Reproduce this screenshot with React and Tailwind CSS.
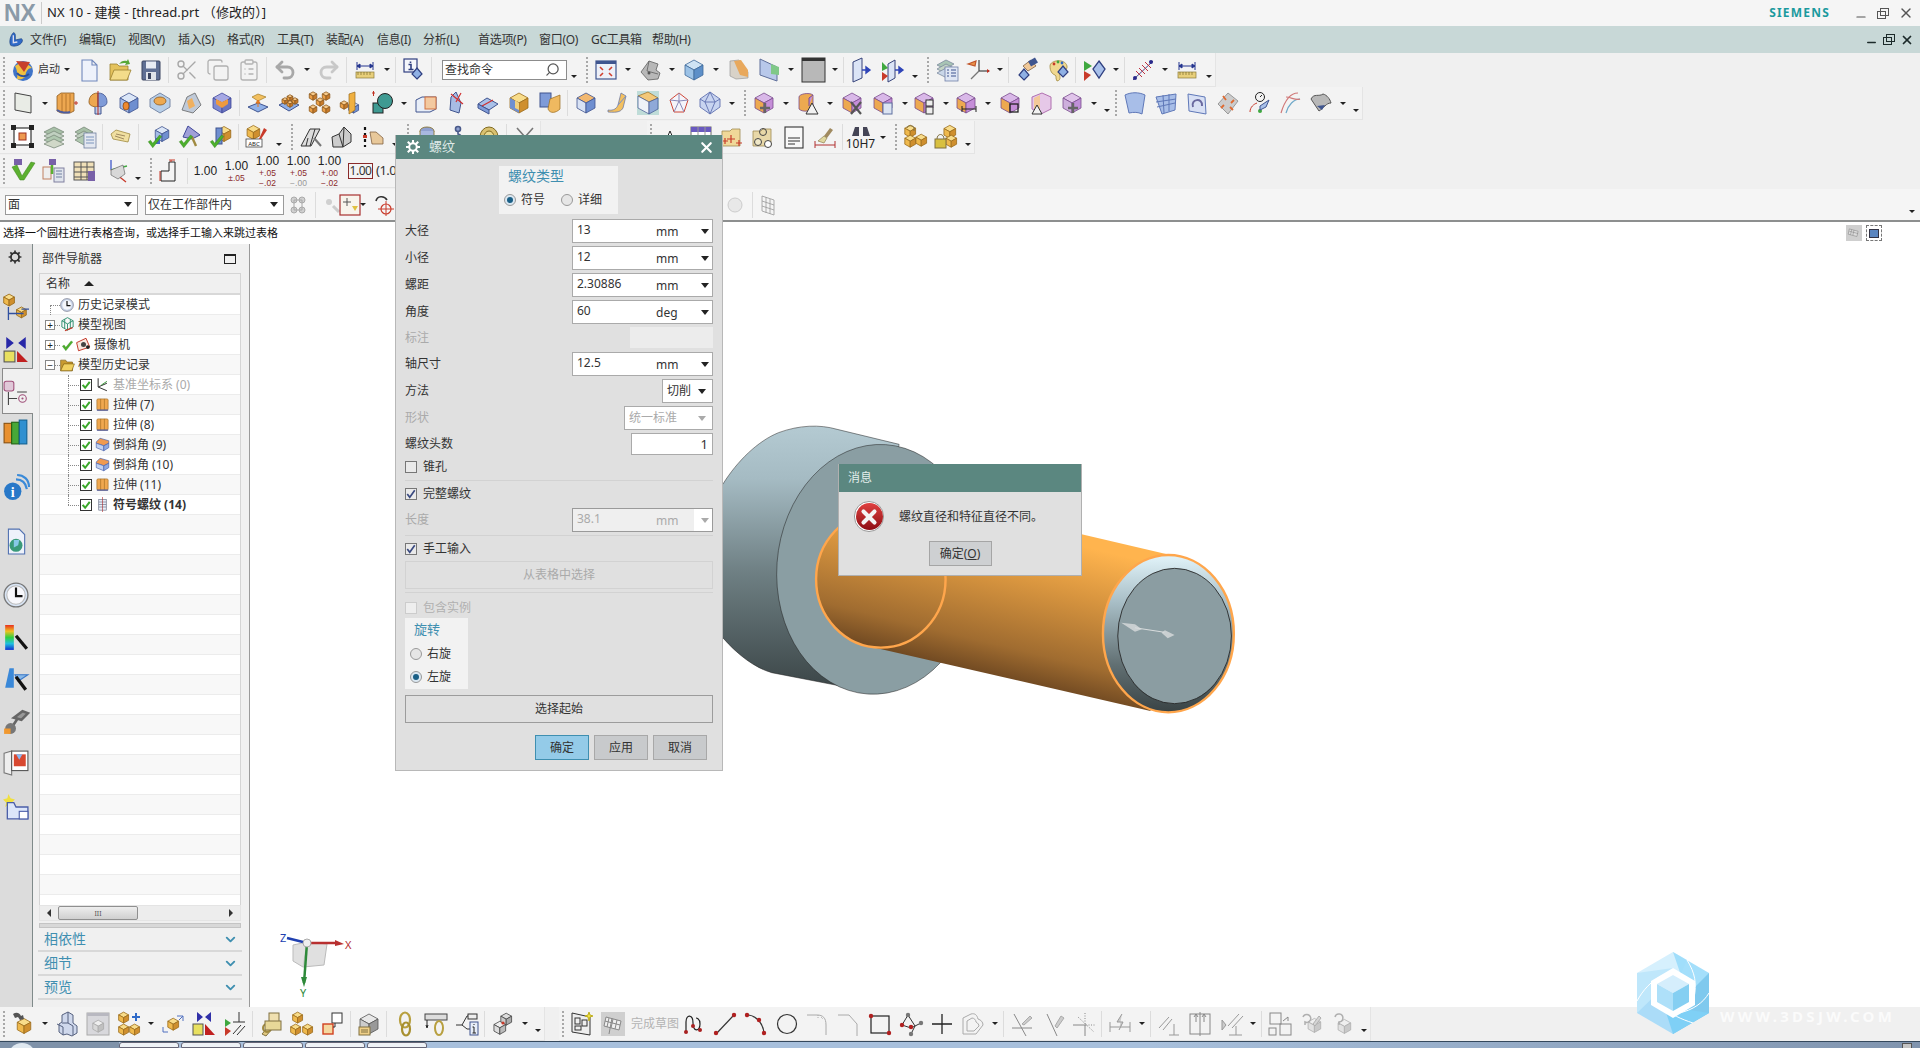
import { Search, Scissors, Copy, ClipboardList, Undo2, Redo2, X, Minus, ChevronDown } from 'lucide-react';

const Cube = ({ x = 0, y = 0, s = 1, t = '#c9d6ee', l = '#8ea6d8', r = '#5f78b8', c = '#3f4f7f' }) => (
    <g transform={`translate(${x} ${y}) scale(${s})`} stroke={c} strokeWidth={0.8 / s} strokeLinejoin="round">
        <polygon points="12,2 21,7 12,12 3,7" fill={t} />
        <polygon points="3,7 12,12 12,22 3,17" fill={l} />
        <polygon points="21,7 12,12 12,22 21,17" fill={r} />
    </g>
);

const gold = { t: '#f8dc8a', l: '#efb94d', r: '#cf8f2e', c: '#9a6c1c' };
const orange = { t: '#f7c98a', l: '#eda047', r: '#c87a2a', c: '#8d5a20' };
const blue = { t: '#dbe6f7', l: '#a4bce8', r: '#6f8fd0', c: '#40548f' };
const purple = { t: '#d9b8e8', l: '#eda950', r: '#c58ed8', c: '#7a4d8e' };

const Diamond = ({ x = 14, y = 14 }) => <polygon points={`${x},${y + 8} ${x + 5},${y + 3} ${x},${y - 3} ${x - 5},${y + 3}`} fill="#8fb0e4" stroke="#2f3f80" strokeWidth="1.2" />;
const Ruler = ({ y = 15 }) => <g><rect x="3" y={y} width="18" height="6" fill="#e8cf7a" stroke="#8a7a3a" strokeWidth=".7" /><path d={`M5 ${y}v3M8 ${y}v3M11 ${y}v3M14 ${y}v3M17 ${y}v3`} stroke="#6a5a20" strokeWidth=".6" /></g>;
const Dim = ({ y = 8, c = '#24358f' }) => <path d={`M4 ${y - 4}v8M20 ${y - 4}v8M4 ${y}h16M4 ${y}l3-2v4zM20 ${y}l-3-2v4z`} stroke={c} strokeWidth="1" fill={c} />;
const Check = ({ x = 0, y = 0, s = 1 }) => <path transform={`translate(${x} ${y}) scale(${s})`} d="M3 13l3-2 3 4 9-11 3 2-12 15z" fill="#4caf2c" stroke="#2b7a18" strokeWidth=".5" />;

const ICONS = {
    start: <g><circle cx="12" cy="13" r="10" fill="#3f74c8" /><path d="M4 8c5-4 13-3 17 2-4 0-6 3-7 9-2 2-5 3-8 2 1-5 0-9-2-13z" fill="#f0c040" /><path d="M5 3l14 1-6 10z" fill="#c8402c" /><path d="M6 15c3 4 9 4 12 1" stroke="#2a4f9a" strokeWidth="2" fill="none" /></g>,
    doc: <path d="M5 2h10l5 5v16H5z M15 2v5h5" fill="#eef2fb" stroke="#7088bc" strokeWidth="1.1" />,
    folder: <g><path d="M2 6h7l2 2h9v14H2z" fill="#e4c25c" stroke="#9a8030" strokeWidth=".8" /><path d="M2 22l4-10h17l-4 10z" fill="#f3dc8a" stroke="#9a8030" strokeWidth=".8" /><path d="M11 6c2-3 5-4 8-3l1-2 2 5-5 1 1-2c-2 0-5 0-7 1z" fill="#58a838" /></g>,
    save: <g><rect x="3" y="3" width="18" height="19" rx="1" fill="#5f6f94" stroke="#3a4460" /><rect x="7" y="3.5" width="10" height="7" fill="#e8ecf4" /><rect x="7" y="14" width="10" height="8" fill="#dfe3ea" /><rect x="9" y="15" width="3" height="6" fill="#3a4460" /></g>,
    scissors: <Scissors x="0" y="0" width="24" height="24" color="#a8a8a8" strokeWidth="1.4" />,
    copy: <Copy x="0" y="0" width="24" height="24" color="#b0b0b0" strokeWidth="1.3" />,
    paste: <ClipboardList x="0" y="0" width="24" height="24" color="#b4b4b4" strokeWidth="1.3" />,
    undo: <Undo2 x="0" y="0" width="24" height="24" color="#a8a8a8" strokeWidth="2.8" />,
    redo: <Redo2 x="0" y="0" width="24" height="24" color="#c8c8c8" strokeWidth="2.8" />,
    measure: <g><Dim y={8} /><Ruler y={14} /></g>,
    info: <g><rect x="2" y="1" width="13" height="13" fill="#f4f6fb" stroke="#2f3f80" strokeWidth="1.2" /><path d="M8.5 3.5v1.5M6.5 6.5h2.5v5M6.5 11.5h5" stroke="#2f3f80" strokeWidth="1.6" fill="none" /><Diamond x={15} y={13} /></g>,
    fit: <g><rect x="2" y="3" width="20" height="18" fill="#edf0f8" stroke="#3f558f" strokeWidth="1.2" /><rect x="2" y="3" width="20" height="3" fill="#3f558f" /><path d="M6 9l3 3M18 9l-3 3M6 18l3-3M18 18l-3-3" stroke="#d04030" strokeWidth="1.6" /></g>,
    bracket: <g><path d="M3 14L11 3l9 3-2 6 4 3-2 6-10 1z" fill="#b8b8b8" stroke="#606060" strokeWidth=".8" /><path d="M11 3l-2 10 11 3" fill="none" stroke="#606060" strokeWidth=".8" /><circle cx="11" cy="15" r="1.5" fill="#555" /></g>,
    cubeB: <Cube t="#cfe3f4" l="#9cc2e6" r="#5d8fc8" c="#3f6a9a" />,
    sheetO: <g><polygon points="4,3 13,2 22,14 22,20 10,21 4,18" fill="#d8d2c8" stroke="#999" strokeWidth=".7" /><polygon points="8,3 15,2 22,12 22,19 14,17" fill="#e8a85c" /></g>,
    panelG: <g><polygon points="3,1 20,9 20,23 3,17" fill="#b8c8ea" stroke="#5f6f9a" /><polygon points="14,6 22,9 22,17 14,16" fill="#7fc888" /></g>,
    blackRect: <g><rect x="1" y="0" width="23" height="24" fill="#b8b8b8" stroke="#333" strokeWidth="1" /><rect x="1" y="0" width="23" height="3" fill="#333" /></g>,
    panelArrow: <g><polygon points="3,4 12,0 12,20 3,24" fill="#dbe4f6" stroke="#36437a" /><path d="M12 12h8M20 12l-4-3v6z" stroke="#2f45b8" strokeWidth="1.4" fill="#2f45b8" /></g>,
    panelArrow2: <g><polygon points="7,6 14,2 14,20 7,24" fill="#dbe4f6" stroke="#36437a" /><path d="M1 4l6 6-6 3z" fill="#3fa83f" /><path d="M1 14l6 4-6 5z" fill="#c83a2a" /><path d="M14 12h8M22 12l-4-3v6z" stroke="#2f45b8" strokeWidth="1.4" fill="#2f45b8" /></g>,
    layers: <g fill="#cdd8e8" stroke="#7c8a9e" strokeWidth=".8"><path d="M2 7l9-5 8 4-9 5z" fill="#a8c4b4" /><path d="M2 11l9-5 8 4-9 5z" fill="#c4d4c4" /><path d="M2 15l9-5 8 4-9 5z" fill="#c9d6e8" /><rect x="10" y="9" width="13" height="14" fill="#dfe6f4" stroke="#6f7fa8" /><path d="M12 12h2M16 12h5M12 15h2M16 15h5M12 18h2M16 18h5" stroke="#3f558f" strokeWidth="1" /></g>,
    csys: <g fill="none" strokeWidth="1.2"><path d="M13 13V2" stroke="#444" /><path d="M13 13h10" stroke="#444" /><path d="M13 13l-8 8" stroke="#777" /><path d="M2 6l8-3-1 5z" fill="#e8924a" stroke="#c0542a" /><path d="M21 11l3 2-3 2z" fill="#c03020" stroke="none" /></g>,
    hand: <g><path d="M8 8l8-6 5 6-8 5z" fill="#f0c898" stroke="#806040" strokeWidth=".8" /><rect x="14" y="1" width="8" height="6" fill="#3f558f" transform="rotate(-30 18 4)" /><Diamond x={9} y={14} /></g>,
    palette: <g><path d="M4 8c0-6 15-8 17 0 1 5-6 5-7 7-1 3 2 7-3 8-2-3 0-5-2-6-3-1-5-4-5-9z" fill="#f0d890" stroke="#a08a40" strokeWidth=".8" /><circle cx="8" cy="6" r="1.4" fill="#c83a2a" /><circle cx="12" cy="4" r="1.4" fill="#3fa83f" /><circle cx="16" cy="5" r="1.4" fill="#2f6ac8" /><Diamond x={17} y={11} /></g>,
    flagD: <g><path d="M2 3l8 5-8 5z" fill="#3fa83f" /><path d="M2 13l7 4-7 6z" fill="#c83a2a" /><polygon points="17,3 23,11 17,20 11,11" fill="#a8c0ea" stroke="#2f3f80" strokeWidth="1.3" /></g>,
    hatch: <g stroke="#c03040" strokeWidth="1"><path d="M2 22L22 3" stroke="#4a4a8a" /><path d="M5 13l6 6M8 10l6 6M11 7l6 6M14 4l6 6" /><circle cx="20" cy="4" r="2" fill="#28288a" stroke="none" /><circle cx="4" cy="20" r="2" fill="#28288a" stroke="none" /></g>,

    plane: <polygon points="4,2 20,5 20,22 4,19" fill="#e9ece6" stroke="#444" strokeWidth="1" />,
    extrude: <g><path d="M2 5l4-3h13v18l-4 2H6l-4-2z" fill="#eda750" stroke="#8d5a20" strokeWidth=".8" /><path d="M7 3v18M11 3v18M15 3v18" stroke="#a86a24" strokeWidth=".8" /><path d="M2 19c4 3 10 3 13 2" stroke="#4c5da0" strokeWidth="2" fill="none" /><path d="M19 12h4M21 10v4" stroke="#c03020" strokeWidth="1" /></g>,
    revolve: <g><path d="M12 2C5 2 3 7 3 11c0 3 3 5 9 5z" fill="#eda750" stroke="#8d5a20" strokeWidth=".8" /><path d="M12 2c7 0 9 5 9 9 0 3-3 5-9 5z" fill="#7f9bd8" stroke="#40548f" strokeWidth=".8" /><path d="M9 16v7h6v-7" fill="#b8c8e8" stroke="#40548f" /><path d="M12 0v24" stroke="#c03020" strokeWidth="1" /></g>,
    hole: <g><Cube {...blue} /><ellipse cx="9" cy="15" rx="3" ry="4" fill="#ee8a30" stroke="#8d4a10" strokeWidth=".8" /></g>,
    boss: <g><polygon points="12,2 22,8 22,16 12,22 2,16 2,8" fill="#b8cfe8" stroke="#7a8aa8" /><ellipse cx="12" cy="10" rx="6" ry="4" fill="#eda950" stroke="#8d5a20" strokeWidth=".8" /></g>,
    pocket: <g><path d="M3 19L8 6l8-4 6 12-8 8z" fill="#c0cad8" stroke="#666" strokeWidth=".8" /><path d="M8 10l5-3 3 8-6 3z" fill="#efb060" /></g>,
    rib: <g><Cube t="#a6a8e4" l="#7f8ad0" r="#6a74c0" c="#40489a" /><polygon points="6,8 12,11 18,8 18,13 12,17 6,13" fill="#ee9a40" /></g>,
    offsetUp: <g><polygon points="2,16 12,12 22,16 12,21" fill="#8fb0e8" stroke="#40548f" /><polygon points="6,6 12,3 20,6 12,10" fill="#f3c060" stroke="#a07a20" strokeWidth=".7" /><path d="M12 9v7M12 9l-2 3h4z" stroke="#e07820" fill="#e07820" /></g>,
    array: <g><polygon points="2,14 12,9 22,14 12,20" fill="#8fb0e8" stroke="#40548f" /><Cube {...orange} x={4} y={6} s={0.33} /><Cube {...orange} x={9} y={3} s={0.33} /><Cube {...orange} x={14} y={6} s={0.33} /><Cube {...orange} x={9} y={9} s={0.33} /></g>,
    grid: <g><Cube {...orange} x={0} y={0} s={0.42} /><Cube {...orange} x={13} y={0} s={0.42} /><Cube {...orange} x={7} y={6} s={0.42} /><Cube {...orange} x={0} y={13} s={0.42} /><Cube {...orange} x={13} y={13} s={0.42} /></g>,
    planeCube: <g><Cube {...blue} x={8} y={10} s={0.55} /><polygon points="10,3 16,1 16,19 10,23" fill="#f0b040" stroke="#9a6c1c" strokeWidth=".7" /><Cube {...orange} x={0} y={9} s={0.42} /></g>,
    unite: <g><path d="M2 2h3M3.5 0v5" stroke="#c03020" /><rect x="3" y="12" width="10" height="10" fill="#3f9a92" stroke="#222" /><circle cx="15" cy="10" r="7.5" fill="#3f9a92" stroke="#222" /></g>,
    split: <g><path d="M2 9l6-3h14v12l-6 3H2z" fill="#e8eef8" stroke="#40548f" /><rect x="11" y="6" width="11" height="12" fill="#f3c9a0" stroke="#d07040" /></g>,
    trim: <g><path d="M6 6l5-5 5 11-2 10-9-3z" fill="#a8bce4" stroke="#40548f" /><path d="M6 3l12 10M16 2l-5 9" stroke="#d03030" strokeWidth="1.2" fill="none" /></g>,
    slab: <g><polygon points="2,13 11,7 22,13 13,19" fill="#a8c0e8" stroke="#40548f" /><polygon points="2,13 13,19 13,23 2,17" fill="#7f9bd8" stroke="#40548f" /><path d="M6 15l11-6" stroke="#d03030" strokeWidth="1.3" /></g>,
    blockOB: <g><Cube {...gold} /><polygon points="3,7 12,12 12,22 3,17" fill="#6f8fd0" /><polygon points="8,9 12,12 12,19 8,17" fill="#f0d080" /></g>,
    shell: <g><rect x="2" y="2" width="11" height="14" fill="#7f9bd8" stroke="#40548f" /><path d="M12 8l10-4v14c-4 4-10 5-12 0z" fill="#efb960" stroke="#9a6c1c" strokeWidth=".7" /></g>,
    cubeOB: <Cube t="#f2b870" l="#d8e2f4" r="#6f8fd0" c="#40548f" />,
    sheetB: <g><path d="M3 19c6 1 9-2 10-5l3-12 5 3-3 12c-2 3-4 5-15 4z" fill="#f3c060" stroke="#6070a0" strokeWidth=".7" /><path d="M13 14l8-9" stroke="#6f8fd0" /></g>,
    cubeY: <g><rect x="1" y="0" width="22" height="24" fill="#bfdcd8" /><polygon points="2,5 12,1 22,7 13,11" fill="#f3c878" stroke="#9a6c1c" strokeWidth=".7" /><polygon points="2,5 13,11 13,23 2,17" fill="#eef2f8" stroke="#40548f" strokeWidth=".7" /><polygon points="22,7 13,11 13,23 22,18" fill="#8fa9d8" stroke="#40548f" strokeWidth=".7" /></g>,
    hexRed: <g fill="none" stroke="#d04838" strokeWidth="1"><polygon points="12,2 21,9 17,21 7,21 3,9" fill="#f4f4fa" /><path d="M12 2v8M3 9l9 1 9-1M7 21l5-11 5 11" stroke="#8a8ab8" /></g>,
    hexBlue: <g stroke="#6070b0" strokeWidth=".9"><polygon points="12,1 22,8 22,16 12,23 2,16 2,8" fill="#c8d4f0" /><path d="M12 1l-5 10 5 12 5-12zM2 8l5 3h10l5-3" fill="none" /></g>,
    sMove: <g><Cube {...purple} /><path d="M13 12v10M8 17h10" stroke="#666" strokeWidth="2.4" /></g>,
    sMoveP: <g><Cube t="#e0c4ea" l="#cdb0dc" r="#c090d8" c="#7a4d8e" /><path d="M13 12v10M8 17h10" stroke="#666" strokeWidth="2.4" /></g>,
    sTri: <g><path d="M3 6c0-3 10-5 14-2v12c0 4-10 6-14 2z" fill="#eda950" stroke="#7a4d8e" strokeWidth=".8" /><path d="M17 4l-4 3v8" stroke="#7a4d8e" fill="#c58ed8" /><polygon points="16,12 22,23 10,23" fill="#f2f2f2" stroke="#333" /></g>,
    sX: <g><Cube {...purple} /><path d="M11 11l10 12M21 11L11 23" stroke="#555" strokeWidth="2.2" /></g>,
    sCopy: <g><Cube {...purple} /><rect x="12" y="12" width="9" height="11" fill="#dce4f2" stroke="#5f70a0" /></g>,
    sSq: <g><Cube {...purple} /><rect x="14" y="9" width="7" height="6" fill="#eee" stroke="#333" /><rect x="14" y="16" width="7" height="7" fill="#eee" stroke="#333" /></g>,
    sDim: <g><Cube {...purple} /><path d="M8 18h14M8 15v6M22 15v6" stroke="#222" strokeWidth="1" /></g>,
    sFrame: <g><Cube {...purple} /><rect x="12" y="13" width="8" height="8" fill="none" stroke="#222" strokeWidth="1.3" /></g>,
    sFace: <g><polygon points="3,6 13,2 22,6 22,18 12,23 3,18" fill="#e6c8e8" stroke="#b070b0" /><polygon points="5,7 11,4 11,20 5,20" fill="#f3c898" /><polygon points="8,14 13,23 3,23" fill="#f2f2f2" stroke="#333" /></g>,
    surf1: <path d="M2 4c6-3 14-3 20 0l-3 19c-4-2-8-2-13-1z" fill="#a8bee8" stroke="#5f78b8" />,
    surf2: <g fill="none" stroke="#5f78b8"><path d="M2 6l20-3-1 16-13 4z" fill="#a8bee8" /><path d="M9 4l1 18M15 3v17M2 11l20-3M3 16l18-4" /></g>,
    surf3: <g fill="none" stroke="#5f78b8"><path d="M3 3l17 3 1 17-17-3z" fill="#d8e0f4" /><path d="M8 16c-3-8 10-10 9-1" strokeWidth="2" stroke="#6a6aa0" /></g>,
    surf4: <g><path d="M12 2l10 8-10 13L2 13z" fill="#cccccc" stroke="#999" /><path d="M7 5l3 4M18 9l-3 3M5 17l3-3M17 19l-3-3" stroke="#e06a30" strokeWidth="1.8" /></g>,
    surf5: <g fill="none" strokeWidth="1"><circle cx="13" cy="6" r="4.5" stroke="#222" /><path d="M13 6l2-2" stroke="#222" /><path d="M3 21c0-5 4-8 7-9" stroke="#c83a2a" /><circle cx="13" cy="20" r="2" fill="#3fa83f" stroke="none" /><polygon points="13,15 22,9 19,16 13,19" fill="#a8c0ea" stroke="#40548f" /></g>,
    surf6: <g fill="none" strokeWidth="1.2"><path d="M3 22C6 12 11 2 20 2" stroke="#d07878" /><path d="M8 22C10 14 16 8 22 8" stroke="#6fa8c8" /><path d="M8 6c5 0 10 4 14 2" stroke="#d07878" /></g>,
    surf7: <g><path d="M2 8c3-6 8-2 12-5 4 1 7 5 8 9-5 0-7 5-12 8z" fill="#b8b8b8" stroke="#555" /><path d="M8 15l5 4 3-5z" fill="#3f558f" /></g>,

    rNode: <g><rect x="3" y="3" width="17" height="17" fill="#fff" stroke="#333" strokeWidth="1.2" /><rect x="8" y="8" width="7" height="7" fill="#ee9a50" stroke="#a03020" /><rect x="0" y="0" width="5" height="5" fill="#222" /><rect x="18" y="0" width="5" height="5" fill="#222" /><rect x="0" y="18" width="5" height="5" fill="#222" /><rect x="18" y="18" width="5" height="5" fill="#222" /></g>,
    stack: <g stroke="#7a8a7a" strokeWidth=".8"><path d="M2 7l10-5 10 5-10 5z" fill="#a8c0a8" /><path d="M2 11l10-5 10 5-10 5z" fill="#c0d0c0" /><path d="M2 15l10-5 10 5-10 5z" fill="#b0c8b0" /><path d="M2 19l10-5 10 5-10 4z" fill="#d0d8c8" /></g>,
    stack2: <g stroke="#7a8a7a" strokeWidth=".8"><path d="M2 7l9-5 9 5-9 5z" fill="#a8c0a8" /><path d="M2 11l9-5 9 5-9 5z" fill="#c0d0c0" /><path d="M2 15l9-5 9 5-9 5z" fill="#b0c8b0" /><rect x="11" y="8" width="12" height="15" fill="#e4e8f0" stroke="#7080a0" /><path d="M13 12h8M13 15h8M13 18h8" stroke="#6080b0" /></g>,
    tag: <g><path d="M2 9l5-4 14 4-2 8L4 14z" fill="#f0dfa0" stroke="#a08a40" strokeWidth=".8" /><path d="M7 9l9 2M6 11l9 3" stroke="#a08a60" /></g>,
    checkBlue: <g><Cube {...blue} x={6} y={0} s={0.75} /><rect x="8" y="13" width="5" height="6" fill="#4c68c8" /><Check x={-1} y={7} s={0.75} /></g>,
    checkHam: <g><path d="M5 12L10 1l12 9-8 4z" fill="#a0a0d8" stroke="#40489a" /><path d="M14 12l4 9" stroke="#a08a40" strokeWidth="2.4" /><Check x={-1} y={7} s={0.75} /></g>,
    checkGold: <g><Cube {...gold} x={6} y={0} s={0.75} /><rect x="7" y="3" width="6" height="16" fill="#6f8fd0" stroke="#40548f" /><Check x={-1} y={7} s={0.75} /></g>,
    abc: <g><Cube {...gold} x={0} y={-1} s={0.7} /><rect x="1" y="14" width="16" height="8" fill="#fff" stroke="#444" strokeWidth=".8" /><text x="9" y="20.5" fontSize="6" textAnchor="middle" fill="#222" fontFamily="Noto Sans">ABC</text><path d="M19 3l3 2-6 9h-2z" fill="#c83a2a" /></g>,
    wedge: <g fill="#ddd" stroke="#333" strokeWidth="1"><path d="M2 21L11 4h10l-9 17z" /><path d="M16 4l-5 17M7 21l2-8" fill="none" /><path d="M15 13l7 8" stroke="#777" strokeWidth="2" /></g>,
    wedge2: <g fill="#ccc" stroke="#333" strokeWidth="1"><path d="M3 22L2 12 9 9l5-7 7 7v8l-8 5z" /><path d="M9 9l4 13M14 2l-1 20" fill="none" /></g>,
    pointer: <g><path d="M4 2v20" stroke="#111" strokeWidth="2.2" strokeDasharray="3 3" /><rect x="2" y="10" width="4" height="3" fill="#c83a2a" /><path d="M9 7h6l7 6v6H11z" fill="#e8c89a" stroke="#806040" strokeWidth=".8" /></g>,
    stackY: <g stroke="#806a20" strokeWidth=".8"><ellipse cx="12" cy="6" rx="7" ry="4" fill="#8fa0d0" /><path d="M5 6v12c0 4 14 4 14 0V6" fill="#a8b8e0" /><path d="M5 11c0 4 14 4 14 0M5 15c0 4 14 4 14 0" fill="none" /></g>,
    hook: <g fill="none" stroke="#4a5a8a" strokeWidth="1.6"><path d="M12 3v6c5 1 6 10 0 11-4 0-6-4-4-7" /><circle cx="12" cy="4" r="2.5" fill="#8fa0d0" /></g>,
    coil: <g><ellipse cx="12" cy="12" rx="9" ry="10" fill="#d8c070" stroke="#806a20" /><ellipse cx="12" cy="12" rx="5" ry="6" fill="#e8d890" stroke="#806a20" /></g>,
    cross: <g stroke="#777" strokeWidth="1.6"><path d="M4 3l16 18M20 3L4 21" /></g>,
    triFold: <g><polygon points="12,6 18,20 6,20" fill="#fff" stroke="#222" /></g>,
    gridP: <g><rect x="2" y="2" width="20" height="20" fill="#fff" stroke="#666" /><rect x="2" y="2" width="20" height="5" fill="#6a5ac0" /><path d="M2 12h20M2 17h20M9 2v20M16 2v20" stroke="#999" /></g>,
    folderP: <g><path d="M2 6h8l2-2h8v17H2z" fill="#f0d898" stroke="#a08a50" strokeWidth=".8" /><path d="M7 14h8M11 10v8M16 18h6M19 15v6M2 16h6M5 13v6" stroke="#c83a2a" strokeWidth="1.2" /></g>,
    folderC: <g><path d="M2 6h8l2-2h8v17H2z" fill="#e8d8a8" stroke="#a08a50" strokeWidth=".8" /><circle cx="12" cy="7" r="3.5" fill="none" stroke="#444" /><circle cx="7" cy="17" r="3.5" fill="#f0e8c8" stroke="#444" /><circle cx="17" cy="19" r="3.5" fill="#fff" stroke="#444" /></g>,
    note: <g><rect x="3" y="2" width="18" height="21" fill="#f8f8f8" stroke="#333" strokeWidth="1.1" /><path d="M6 13h12M6 16h12M6 19h7" stroke="#333" /></g>,
    brush: <g><path d="M17 3l3 2-6 8-3-2z" fill="#a08a60" /><path d="M11 11l3 2-3 5-6-2z" fill="#e0d8a0" stroke="#807040" strokeWidth=".6" /><path d="M2 16v7M22 16v7M2 20h20" stroke="#b03030" strokeWidth="1" /></g>,
    lock: <g><Cube {...gold} x={0} y={-1} s={0.6} /><Cube {...gold} x={11} y={8} s={0.6} /><Cube {...gold} x={0} y={9} s={0.6} /><path d="M4 3c0-3 7-3 7 0v3" stroke="#807040" fill="none" /></g>,
    lock2: <g><Cube {...gold} x={8} y={-1} s={0.65} /><Cube {...gold} x={10} y={9} s={0.6} /><rect x="1" y="14" width="11" height="9" fill="#d8c040" stroke="#807040" /><path d="M3 14c0-6 7-6 7 0" stroke="#807040" fill="none" /></g>,
    checkV: <g><rect x="3" y="0" width="8" height="6" fill="#7860a8" /><path d="M1 8l5-2 5 11L20 3l4 1-11 17h-4z" fill="#5cb030" stroke="#3a8018" strokeWidth=".5" /></g>,
    machine: <g><rect x="7" y="0" width="7" height="6" fill="#7860a8" /><rect x="12" y="9" width="10" height="14" fill="#e0e4ec" stroke="#8080a0" /><rect x="1" y="8" width="8" height="12" fill="#eee" stroke="#c08060" /><path d="M10 6v9" stroke="#5cb030" strokeWidth="2.5" /><path d="M14 12h6M14 15h6M14 18h6" stroke="#7080a0" /></g>,
    tableV: <g><rect x="1" y="3" width="20" height="18" fill="#f0e0b8" stroke="#555" /><path d="M1 8h20M1 13h20M1 18h20M8 3v18M14 3v18" stroke="#555" /><rect x="15" y="12" width="7" height="10" fill="#7860a8" /></g>,
    csysG: <g fill="none" strokeWidth="1.3"><path d="M7 11V1" stroke="#3f58c8" /><path d="M7 11l16-4" stroke="#3fa83f" /><path d="M7 11l15 12" stroke="#c83a2a" /><path d="M7 11l12-5 2 9-7 5-7-4z" fill="#d8d8d8" stroke="#555" strokeWidth=".6" /></g>,
    dimBox: <g fill="none" stroke="#222" strokeWidth="1"><path d="M3 22h14V3h-6v9H3z" fill="#f4f4f4" /><path d="M11 1h6M13 1v2M2 12v10" stroke="#c83a2a" /></g>,
    molecule: <g fill="#cfcfcf" stroke="#aaa"><circle cx="8" cy="7" r="3" /><circle cx="16" cy="7" r="3" /><circle cx="8" cy="17" r="3" /><circle cx="16" cy="17" r="3" /><path d="M8 7h8v10H8z" fill="none" /></g>,
    gearY: <g><circle cx="9" cy="9" r="3" fill="#d0d0d0" /><path d="M13 13l6 6" stroke="#ccc" strokeWidth="3" /></g>,
    redBox: <g><rect x="2" y="2" width="20" height="20" fill="#f8f4ec" stroke="#a83030" strokeWidth="1.2" /><path d="M5 9h8M9 5v8" stroke="#555" /><path d="M14 13h6l-3 5z" fill="#e0c040" /></g>,
    hookPlus: <g fill="none"><path d="M4 8c1-5 8-6 11-1" stroke="#333" strokeWidth="1.6" /><circle cx="14" cy="16" r="5" stroke="#c83a2a" strokeWidth="1.2" /><path d="M14 8v15M6 16h16" stroke="#c83a2a" /></g>,
    discG: <circle cx="12" cy="12" r="7" fill="#e8e8e8" stroke="#ccc" />,
    gridG: <g stroke="#999" fill="#f4f4f4" strokeWidth=".8"><polygon points="6,3 18,7 18,22 6,18" /><path d="M10 4v16M14 6v15M6 8l12 4M6 13l12 4" /></g>,

    birdBox: <g><Cube {...gold} x={4} y={5} s={0.75} /><path d="M2 2c3-2 6-2 8 2l2-1 1 4-4 1-2-3-3 1z" fill="#555" /></g>,
    partsG: <g fill="#cfd8ec" stroke="#55607e"><path d="M7 3l6-3 5 3v8l4 3v7l-5 3-5-2-4 1-4-3v-8l3-2z" /><path d="M13 0v11M7 11l6 0 5 3v9M2 12l6 3v8" fill="none" /></g>,
    partsDis: <g><rect x="1" y="1" width="22" height="22" fill="#d8d8dc" stroke="#aaa" /><rect x="1" y="1" width="22" height="3" fill="#b8b8c0" /><Cube t="#eee" l="#d8d8d8" r="#c0c0c0" c="#aaa" x={5} y={7} s={0.6} /></g>,
    cubesPlus: <g><Cube {...gold} x={0} y={-1} s={0.55} /><Cube {...gold} x={0} y={11} s={0.55} /><Cube {...gold} x={11} y={11} s={0.55} /><path d="M15 5h8M19 1v8" stroke="#2f6ac8" strokeWidth="2" /></g>,
    scaleCube: <g><Cube {...gold} x={5} y={5} s={0.6} /><path d="M16 4h6v5M22 4l-4 4M2 20v-5M2 20h5" stroke="#5070c0" fill="none" /></g>,
    mirror: <g><path d="M5 0v10l6-5zM19 0v10l-6-5z" fill="#3030a8" /><rect x="1" y="12" width="10" height="11" fill="#e8e060" stroke="#555" /><polygon points="13,12 23,23 13,23" fill="#c02020" /></g>,
    flagPar: <g><path d="M2 7l6 4-6 4z" fill="#3fa83f" /><path d="M2 15l6 4-6 5z" fill="#c83a2a" /><path d="M10 10h12M16 0v10M10 22l8-9M14 23l8-9" stroke="#333" strokeWidth="1" fill="none" /></g>,
    keyBox: <g><path d="M3 22l7-8 3 3-6 7z" fill="#e0c880" stroke="#807040" /><circle cx="8" cy="16" r="4" fill="none" stroke="#a08a40" strokeWidth="2" /><rect x="10" y="1" width="10" height="9" fill="#f0e0b0" stroke="#807040" /><rect x="6" y="9" width="16" height="9" fill="#e8d898" stroke="#807040" /></g>,
    goldTri: <g><Cube {...gold} x={1} y={-1} s={0.55} /><Cube {...gold} x={-1} y={11} s={0.55} /><Cube {...gold} x={11} y={11} s={0.55} /></g>,
    redStep: <g><rect x="11" y="1" width="10" height="10" fill="#fff" stroke="#333" /><rect x="2" y="12" width="10" height="10" fill="#f4d8a0" stroke="#d04020" strokeWidth="1.4" /><path d="M14 11v4h-2" stroke="#333" fill="none" /></g>,
    assy: <g><Cube t="#e8e8e8" l="#ccc" r="#999" c="#555" /><rect x="2" y="15" width="11" height="8" fill="#f0d088" stroke="#807040" /><path d="M4 18h7M4 20h7" stroke="#807040" /></g>,
    chain: <g fill="none" stroke="#b8a040" strokeWidth="2.2"><ellipse cx="12" cy="8" rx="5" ry="7.5" /><ellipse cx="13" cy="17" rx="4" ry="6.5" stroke="#a89030" /></g>,
    chainBar: <g fill="none"><rect x="1" y="2" width="22" height="6" fill="#ddd" stroke="#444" /><path d="M3 8v6M2 13l1 3 1-3" stroke="#222" /><ellipse cx="15" cy="16" rx="4" ry="7" stroke="#b8a040" strokeWidth="2" /></g>,
    treeInfo: <g fill="none" stroke="#333"><path d="M1 13h6M7 13l5-9h10M7 13l5 4h3" /><rect x="13" y="2" width="9" height="5" fill="#eee" /><rect x="15" y="10" width="8" height="13" fill="#e8eef8" stroke="#40548f" /><path d="M19 12v1M17.5 15H19v6M17.5 21h3.5" stroke="#222" /></g>,
    twoCubes: <g><Cube t="#ddd" l="#ccc" r="#aaa" c="#444" x={8} y={0} s={0.6} /><Cube t="#eee" l="#ddd" r="#bbb" c="#444" x={1} y={8} s={0.65} /><circle cx="12" cy="11" r="1.6" fill="#c83a2a" /></g>,
    sketchNew: <g fill="none" stroke="#333" strokeWidth="1"><polygon points="2,1 20,5 20,23 2,20" fill="#eee" /><rect x="5" y="6" width="5" height="6" /><rect x="12" y="8" width="5" height="6" /><rect x="5" y="14" width="6" height="4" /><path d="M19 0l1 3 3 1-3 1-1 4-1-4-3-1 3-1z" fill="#f0e040" stroke="#c0b020" /></g>,
    flagDis: <g><rect x="0" y="0" width="24" height="24" fill="#cfcfcf" /><path d="M5 5l15 4-2 9-15-4z" fill="#eee" stroke="#888" /><path d="M8 6l-2 9M12 7l-2 9M16 8l-2 9M4 9l15 4" stroke="#888" /><path d="M8 22l3-16" stroke="#888" /></g>,
    sCurve: <g fill="none" stroke="#222" strokeWidth="1.2"><path d="M4 20V10c0-8 7-8 7 1 0 9 7 9 7 1 0-6-4-6-4-6" /><circle cx="4" cy="20" r="2" fill="#a82020" stroke="none" /><circle cx="11" cy="14" r="2" fill="#a82020" stroke="none" /><circle cx="18" cy="18" r="2" fill="#a82020" stroke="none" /></g>,
    sLine: <g><path d="M3 22L20 4" stroke="#333" strokeWidth="1.2" /><circle cx="21" cy="3" r="2.2" fill="#b02020" /><circle cx="3" cy="21" r="2.2" fill="#b02020" /></g>,
    sArc: <g fill="none"><path d="M3 3c9 0 16 8 17 18" stroke="#333" strokeWidth="1.2" /><circle cx="3" cy="3" r="2.2" fill="#b02020" /><circle cx="15" cy="8" r="2.2" fill="#b02020" /><circle cx="20" cy="21" r="2.2" fill="#b02020" /></g>,
    sCircle: <circle cx="12" cy="12" r="9.5" fill="none" stroke="#333" strokeWidth="1.2" />,
    sFillet: <g fill="none" stroke="#aaa"><path d="M1 3h10c6 0 9 3 9 10v10" /><path d="M12 3v4M15 5l2 2" strokeDasharray="1 1" /></g>,
    sChamfer: <path d="M1 3h11l8 9v12" fill="none" stroke="#aaa" />,
    sRect: <g><rect x="3" y="4" width="18" height="17" fill="none" stroke="#222" strokeWidth="1.2" /><circle cx="3" cy="4" r="2.2" fill="#b02020" /><circle cx="21" cy="21" r="2.2" fill="#b02020" /></g>,
    sPoly: <g fill="none" stroke="#333"><path d="M9 3L3 13l9 3 4-2 6-3M9 3l7 11-4 8" /><circle cx="9" cy="3" r="2.2" fill="#777" stroke="none" /><circle cx="3" cy="13" r="2.2" fill="#b02020" stroke="none" /><circle cx="12" cy="15" r="2.2" fill="#b02020" stroke="none" /><circle cx="22" cy="11" r="2.2" fill="#777" stroke="none" /><circle cx="12" cy="22" r="2.2" fill="#777" stroke="none" /></g>,
    sPlus: <path d="M12 2v20M2 12h20" stroke="#222" strokeWidth="1.3" />,
    sOffset: <g fill="none" stroke="#aaa" strokeWidth="1"><path d="M2 22V6l8-4c4-1 6 1 7 5 3 1 5 3 5 6l-7 9z" /><path d="M6 19V9l5-3c2 0 4 2 4 4 2 1 3 3 3 4l-5 5z" /></g>,
    sTrim: <g fill="none" stroke="#888"><path d="M4 2l12 22M2 16h20" /><path d="M12 12l8-8 2 2-8 7z" fill="#ccc" stroke="#aaa" /></g>,
    sExt: <g fill="none" stroke="#888"><path d="M6 2l10 22" /><path d="M14 14l6-10 3 2-7 10z" fill="#ccc" stroke="#aaa" /></g>,
    sCorner: <g fill="none" stroke="#888"><path d="M1 13h13M13 13v11" /><path d="M6 5l16 15M13 1v11M14 13h9" strokeDasharray="1 1.5" /></g>,
    sBolt: <g fill="none" stroke="#999"><path d="M2 10v10M22 10v10M2 15h20" /><path d="M14 2l-5 8h6l-4 8" fill="#ccc" /></g>,
    sPar: <g stroke="#999" fill="none"><path d="M2 16L12 5M6 18l9-11M12 23h10M17 12v11" /></g>,
    sLen: <g stroke="#888" fill="none"><rect x="2" y="2" width="20" height="20" /><path d="M12 0v24M8 2v8M16 2v8M6 5l2-3 2 3M14 5l2-3 2 3" /></g>,
    sLock: <g stroke="#999" fill="none"><path d="M3 8l4 5-4 5z" fill="#ccc" /><path d="M9 14L20 2M13 16L24 4M10 23h13M17 14v9" /></g>,
    sPair: <g stroke="#888" fill="none"><rect x="2" y="1" width="11" height="11" /><rect x="12" y="12" width="11" height="11" /><rect x="1" y="16" width="7" height="7" /><path d="M15 9l5-4v4" /></g>,
    sLocks: <g opacity=".75"><Cube t="#eee" l="#ddd" r="#bbb" c="#999" x={7} y={5} s={0.7} /><path d="M4 5a4 4 0 1 1 2 5v3" fill="none" stroke="#999" strokeWidth="1.5" /><path d="M14 12l6-8 2 2-6 8z" fill="#ccc" stroke="#999" /></g>,
    sLocks2: <g opacity=".75"><Cube t="#eee" l="#ddd" r="#bbb" c="#999" x={6} y={6} s={0.7} /><path d="M5 5a4 4 0 1 1 4 5v3" fill="none" stroke="#999" strokeWidth="1.5" /></g>,
};

const Grip = ({ first, cls = 'ml-[3px]' }) => (
    <span className={`${first ? '' : cls} w-[7px] shrink-0 flex justify-center`}>
        <span className="h-[26px] border-l-2 border-dotted border-[#a8a8a8]" />
    </span>
);

const Sep = () => (
    <span className="w-[5px] shrink-0 flex justify-center">
        <span className="h-[26px] w-px bg-[#dcdcdc]" />
    </span>
);

function Caret({ low }) {
    return (
        <span className={`w-[13px] shrink-0 flex justify-center ${low ? 'pt-[14px]' : ''}`}>
            <span className="border-x-[3px] border-t-[3.5px] border-x-transparent border-t-[#222]" />
        </span>
    );
}

function I({ n, dim, cls = '' }) {
    return (
        <span className={`w-[31px] h-full shrink-0 flex items-center justify-center ${cls}`}>
            <svg width="24" height="24" viewBox="0 0 24 24" className={`overflow-visible ${dim ? 'opacity-45' : ''}`}>{ICONS[n]}</svg>
        </span>
    );
}

const Bar = ({ children, h = 'h-[33px]', extra = '' }) => (
    <div className={`flex items-center ${h} bg-[#f3f3f3] border-r border-b border-[#e4e4e4] ${extra}`}>{children}</div>
);

const Row = ({ children }) => <div className="flex h-[34px] shrink-0">{children}</div>;

const Tol = ({ a, b, c, dimC }) => (
    <span className="w-[31px] shrink-0 flex flex-col items-center text-[#222] font-['Liberation_Sans',sans-serif]">
        <span className="text-[12px] leading-[14px]">{a}</span>
        {b && <span className="text-[8.5px] leading-[10px] text-[#8a2a2a]">{b}</span>}
        {c && <span className={`text-[8.5px] leading-[10px] ${dimC ? 'text-[#999]' : 'text-[#8a2a2a]'}`}>{c}</span>}
    </span>
);

const MENU = [
    ['文件(F)', 'w-[49px]'], ['编辑(E)', 'w-[49px]'], ['视图(V)', 'w-[50px]'], ['插入(S)', 'w-[49px]'], ['格式(R)', 'w-[50px]'],
    ['工具(T)', 'w-[49px]'], ['装配(A)', 'w-[51px]'], ['信息(I)', 'w-[46px]'], ['分析(L)', 'w-[55px]'], ['首选项(P)', 'w-[61px]'],
    ['窗口(O)', 'w-[52px]'], ['GC工具箱', 'w-[61px]'], ['帮助(H)', 'w-[40px]'],
];

function TopBars() {
    return (
        <>
            <Row>
                <Bar extra="h-[34px]">
                    <Grip first /><I n="start" /><span className="w-[22px] text-[11px] text-[#333] shrink-0 whitespace-nowrap">启动</span><Caret />
                    <I n="doc" /><I n="folder" /><I n="save" /><Sep />
                    <I n="scissors" /><I n="copy" /><I n="paste" /><Sep />
                    <I n="undo" /><Caret /><I n="redo" /><Sep />
                    <I n="measure" /><Caret /><Sep /><I n="info" /><Sep />
                    <span className="ml-[8px] w-[125px] h-[20px] shrink-0 bg-white border border-[#8c8c8c] flex items-center justify-between pl-[2px] pr-[6px] text-[12px] text-[#333]">
                        查找命令<Search size={15} color="#555" className="-scale-x-100" />
                    </span>
                    <Caret low /><Grip />
                    <I n="fit" /><Caret /><I n="bracket" /><Caret /><I n="cubeB" /><Caret />
                    <I n="sheetO" /><I n="panelG" /><Caret /><I n="blackRect" /><Caret /><Sep />
                    <I n="panelArrow" /><I n="panelArrow2" /><Caret low /><Grip />
                    <I n="layers" /><I n="csys" /><Caret /><Sep />
                    <I n="hand" /><I n="palette" /><Sep />
                    <I n="flagD" /><Caret /><Sep /><I n="hatch" /><Caret /><I n="measure" /><Caret low />
                </Bar>
            </Row>
            <Row>
                <Bar>
                    <Grip first /><I n="plane" /><Caret />
                    <I n="extrude" /><I n="revolve" /><I n="hole" /><I n="boss" /><I n="pocket" /><I n="rib" /><Sep />
                    <I n="offsetUp" /><I n="array" /><I n="grid" /><I n="planeCube" /><I n="unite" /><Caret />
                    <I n="split" /><I n="trim" /><I n="slab" /><I n="blockOB" /><I n="shell" /><Sep />
                    <I n="cubeOB" /><I n="sheetB" /><I n="cubeY" /><I n="hexRed" /><I n="hexBlue" /><Caret /><Grip />
                    <I n="sMove" /><Caret /><I n="sTri" /><Caret /><I n="sX" /><I n="sCopy" /><Caret />
                    <I n="sSq" cls="-ml-[3px]" /><Caret /><I n="sDim" cls="-ml-[2px]" /><Caret /><I n="sFrame" /><I n="sFace" /><I n="sMoveP" /><Caret /><Caret low /><Grip cls="-ml-[1px]" />
                    <I n="surf1" /><I n="surf2" /><I n="surf3" /><I n="surf4" /><I n="surf5" /><I n="surf6" /><I n="surf7" /><Caret /><Caret low />
                </Bar>
            </Row>
            <Row>
                <Bar>
                    <Grip first /><I n="rNode" /><I n="stack" /><I n="stack2" /><Sep /><I n="tag" /><Sep />
                    <I n="checkBlue" cls="ml-[2px]" /><I n="checkHam" /><I n="checkGold" /><Sep /><I n="abc" /><Caret low /><Grip />
                    <I n="wedge" /><I n="wedge2" /><I n="pointer" /><Caret low /><Grip />
                    <I n="stackY" /><I n="hook" /><I n="coil" /><Sep /><I n="cross" />
                </Bar>
                <Bar extra="ml-[106px]">
                    <Grip first /><I n="triFold" /><I n="gridP" /><I n="folderP" /><I n="folderC" /><I n="note" /><I n="brush" /><Sep />
                    <span className="w-[31px] shrink-0 flex flex-col items-center">
                        <svg width="20" height="13" viewBox="0 0 20 13"><path d="M1 11l3-9h4v9zM19 11l-3-9h-4v9zM8 5h4" fill="#445" /></svg>
                        <span className="text-[12px] leading-[12px] text-[#222]">10H7</span>
                    </span>
                    <Caret /><Grip /><I n="lock" /><I n="lock2" /><Caret low />
                </Bar>
            </Row>
            <Row>
                <Bar>
                    <Grip first /><I n="checkV" /><I n="machine" /><I n="tableV" /><I n="csysG" /><Caret low /><Grip /><I n="dimBox" /><Sep />
                    <Tol a="1.00" /><Tol a="1.00" b="±.05" /><Tol a="1.00" b="+.05" c="−.02" /><Tol a="1.00" b="+.05" c="−.00" dimC />
                    <Tol a="1.00" b="+.00" c="−.02" />
                    <span className="w-[31px] shrink-0 flex justify-center"><span className="border border-[#8a2a2a] text-[12px] leading-[14px] px-px tracking-[-0.5px]">1.00</span></span>
                    <span className="w-[31px] shrink-0 text-[13px] tracking-[-0.5px] text-[#333] whitespace-nowrap">(1.00)</span>
                </Bar>
            </Row>
        </>
    );
}

function SelectBox({ w, children }) {
    return (
        <span className={`${w} h-[20px] shrink-0 bg-white border border-[#9a9a9a] flex items-center justify-between pl-[2px] pr-[5px] text-[12px] text-[#333]`}>
            {children}
            <span className="border-x-[4px] border-t-[5px] border-x-transparent border-t-[#222]" />
        </span>
    );
}

function SelectionBar() {
    return (
        <div className="flex items-center h-[33px] shrink-0 bg-[#f5f5f5] border-b-2 border-[#8d8f8f] pl-[5px]">
            <SelectBox w="w-[133px]">面</SelectBox>
            <span className="ml-[7px]"><SelectBox w="w-[139px]">仅在工作部件内</SelectBox></span>
            <span className="w-[1px] ml-[-3px]" />
            <I n="molecule" /><Sep />
            <span className="-mx-[2px]"><I n="gearY" /></span><span className="-ml-[11px]"><I n="redBox" /></span>
            <span className="-ml-[9px]"><Caret /></span>
            <span className="-ml-[1px]"><I n="hookPlus" /></span>
            <span className="ml-[320px]"><I n="discG" /></span><Sep />
            <span className="-ml-[3px]"><I n="gridG" /></span>
            <span className="ml-auto mr-[5px] pt-[14px] flex"><span className="border-x-[3px] border-t-[3.5px] border-x-transparent border-t-[#222]" /></span>
        </div>
    );
}

const STRIP = [
    ['w-[26px] h-[30px] mt-[48px]', <g key="a"><Cube {...gold} x={-1} y={-1} s={0.55} /><Cube {...gold} x={11} y={11} s={0.5} /><path d="M5 12v12M5 18h14M17 14h7" stroke="#3050a0" strokeWidth="1.2" fill="none" /></g>],
    ['w-[26px] h-[30px] mt-[13px]', <g key="b"><path d="M3 0v11l7-5.500zM21 0v11l-7-5.500z" fill="#2828a8" /><rect x="1" y="13" width="10" height="10" fill="#e8e060" stroke="#555" /><polygon points="13,13 23,23 13,23" fill="#c02020" /></g>],
    ['w-[26px] h-[30px] mt-[12px]', <g key="c"><rect x="1" y="2" width="9" height="9" rx="2" fill="#e0c8d8" stroke="#a0507a" /><path d="M5 12v12M5 18h8M13 12h9" stroke="#444" fill="none" /><circle cx="18" cy="18" r="3.5" fill="none" stroke="#a0507a" /><circle cx="18" cy="18" r="1" fill="#a0507a" /></g>],
    ['w-[26px] h-[30px] mt-[10px]', <g key="d"><rect x="1" y="4" width="7" height="18" fill="#e89030" stroke="#885010" /><rect x="8" y="3" width="7" height="20" fill="#48a838" stroke="#206010" /><rect x="15" y="1" width="7" height="22" fill="#3090d0" stroke="#106090" /></g>],
    ['w-[26px] h-[30px] mt-[26px]', <g key="e"><circle cx="9" cy="15" r="8" fill="#2878c8" /><text x="9" y="20" fontSize="13" fontWeight="700" textAnchor="middle" fill="#fff" fontFamily="Liberation Serif">i</text><path d="M12 4c5 0 9 3 10 9M13 0c6 0 11 4 11 11" stroke="#3a8ad8" strokeWidth="2" fill="none" /></g>],
    ['w-[26px] h-[30px] mt-[23px]', <g key="f"><path d="M5 1h10l5 5v18H5z" fill="#eef2fb" stroke="#5070b0" /><circle cx="12" cy="16" r="6" fill="#3a9a7a" /><path d="M10 11h5l-1 5-4 2z" fill="#88c8e8" /></g>],
    ['w-[26px] h-[30px] mt-[24px]', <g key="g"><circle cx="12" cy="12" r="11" fill="#d8e4f4" stroke="#777" strokeWidth="1.2" /><circle cx="12" cy="12" r="8.5" fill="#f8f8fc" stroke="#bbb" /><path d="M12 5v8h6" stroke="#111" strokeWidth="2" fill="none" /></g>],
    ['w-[26px] h-[30px] mt-[13px]', <g key="h"><defs><linearGradient id="rb" x1="0" y1="0" x2="0" y2="1"><stop offset="0" stopColor="#e83020" /><stop offset=".25" stopColor="#f0c020" /><stop offset=".5" stopColor="#30d040" /><stop offset=".75" stopColor="#20c0e0" /><stop offset="1" stopColor="#1030d0" /></linearGradient></defs><rect x="2" y="0" width="8" height="23" fill="url(#rb)" /><path d="M12 10l10 12" stroke="#111" strokeWidth="3" /></g>],
    ['w-[26px] h-[30px] mt-[11px]', <g key="i"><path d="M6 2h4v18H2z" fill="#3a88d8" /><path d="M11 8h12l-9 6z" fill="#88b8e8" stroke="#3a78c8" /><path d="M12 10l9 12" stroke="#111" strokeWidth="3" /></g>],
    ['w-[26px] h-[30px] mt-[13px]', <g key="j"><path d="M10 8l8-6 5 2-6 6zM14 8L6 20" stroke="#666" strokeWidth="2.4" fill="#999" /><circle cx="7" cy="18" r="5" fill="#777" /><rect x="1" y="18" width="6" height="5" fill="#f09830" /></g>],
    ['w-[26px] h-[30px] mt-[11px]', <g key="k"><path d="M1 3l7-2v22l-7-2z" fill="#eee" stroke="#777" /><rect x="8" y="1" width="15" height="18" fill="#fff" stroke="#555" /><rect x="10" y="4" width="11" height="11" fill="#d84830" /><path d="M12 4l3 5 3-5z" fill="#88b8f0" /></g>],
    ['w-[26px] h-[30px] mt-[14px]', <g key="l"><path d="M2 0l2 4 4 1-3 3 1 4-4-2-3 2 1-4-3-3 4-1z" fill="#f0e040" transform="translate(3 0)" /><path d="M4 8h6l2 4h11v11H4z" fill="#dce6fa" stroke="#4a5ea8" strokeWidth="1.2" /><rect x="15" y="16" width="8" height="7" fill="#fff" stroke="#4a5ea8" /></g>],
];

function LeftStrip() {
    return (
        <div className="relative w-[33px] shrink-0 bg-[#dcdcdc] border-r border-[#7f8a8a] flex flex-col items-center">
            <svg width="14" height="14" viewBox="0 0 24 24" className="absolute left-[8px] top-[6px]" fill="none" stroke="#333" strokeWidth="3">
                <circle cx="12" cy="12" r="7" /><path d="M12 1v5M12 18v5M1 12h5M18 12h5M4 4l4 4M16 16l4 4M4 20l4-4M16 8l4-4" />
            </svg>
            <span className="absolute left-[2px] top-[124px] w-[31px] h-[46px] bg-[#f0f0f0] border border-r-0 border-[#8a8a8a]" />
            {STRIP.map(([cls, g], i) => (
                <svg key={i} viewBox="0 0 24 24" className={`${cls} relative overflow-visible shrink-0`}>{g}</svg>
            ))}
        </div>
    );
}

const Dots = ({ cls }) => <span className={`absolute border-[#888] border-dotted ${cls}`} />;

const TREE = [
    { label: '基准坐标系 (0)', icon: 'csysT', dim: true },
    { label: '拉伸 (7)', icon: 'ext' },
    { label: '拉伸 (8)', icon: 'ext' },
    { label: '倒斜角 (9)', icon: 'chm' },
    { label: '倒斜角 (10)', icon: 'chm' },
    { label: '拉伸 (11)', icon: 'ext' },
    { label: '符号螺纹 (14)', icon: 'thd', bold: true },
];

const TREE_ICONS = {
    csysT: <g fill="none" strokeWidth="1.6"><path d="M5 2v14l14-6M5 16l14 6" stroke="#333" /><path d="M10 13l9-6" stroke="#3a9a3a" /></g>,
    ext: <g><rect x="3" y="3" width="18" height="18" rx="2" fill="#f0a850" stroke="#a06a20" /><path d="M9 3v18M15 3v18" stroke="#a06a20" /><path d="M3 21h18" stroke="#5060a8" strokeWidth="2" /></g>,
    chm: <g><polygon points="2,8 8,2 22,6 22,10 14,14 2,10" fill="#f09a50" stroke="#405aa8" /><polygon points="2,10 14,14 14,22 2,17" fill="#c0d0f0" stroke="#405aa8" /><polygon points="22,10 14,14 14,22 22,17" fill="#8fa8e0" stroke="#405aa8" /></g>,
    thd: <g fill="none" stroke="#606880"><rect x="6" y="4" width="12" height="17" fill="#e8eef8" /><path d="M6 8h12M6 12h12M6 16h12" /><path d="M12 0v24" stroke="#b03030" /></g>,
};

const Expander = ({ sign }) => (
    <span className="relative w-[20px] h-full flex items-center">
        <span className="absolute left-[5px] top-[5px] w-[10px] h-[10px] bg-white border border-[#888] flex items-center justify-center text-[10px] leading-none text-[#222]">{sign}</span>
        <Dots cls="left-[15px] top-[10px] w-[5px] border-t" />
    </span>
);

function Tree() {
    return (
        <>
            <div className="relative flex items-center h-[20px] border-b border-[#ececec] bg-white">
                <Dots cls="left-[10px] top-[10px] h-[60px] border-l" />
                <Dots cls="left-[10px] top-[10px] w-[10px] border-t" />
                <span className="w-[20px]" />
                <svg width="14" height="14" viewBox="0 0 24 24"><circle cx="12" cy="12" r="11" fill="#c8d4e8" stroke="#667" /><circle cx="12" cy="12" r="8" fill="#f4f6fb" /><path d="M12 5v8h6" stroke="#111" strokeWidth="2" fill="none" /></svg>
                <span className="ml-[4px]">历史记录模式</span>
            </div>
            <div className="relative flex items-center h-[20px] border-b border-[#ececec] bg-[#f8f8f8]">
                <Expander sign="+" />
                <svg width="15" height="15" viewBox="0 0 24 24" fill="none" stroke="#2f8f6f" strokeWidth="1.5"><path d="M12 1l9 5v10l-9 5-9-5V6zM3 6l9 5 9-5M12 11v10M7.500 3.500v15M16.500 3.500v15" /><path d="M8 22l12-5" stroke="#c83a2a" strokeWidth="2" /></svg>
                <span className="ml-[3px]">模型视图</span>
            </div>
            <div className="relative flex items-center h-[20px] border-b border-[#ececec] bg-white">
                <Expander sign="+" />
                <svg width="14" height="14" viewBox="0 0 24 24"><Check x={1} y={1} s={1} /></svg>
                <svg width="15" height="15" viewBox="0 0 24 24" className="ml-[2px]"><path d="M1 9l15-7 6 14-18 6z" fill="#f8e8e0" stroke="#c03020" strokeWidth="1.5" /><circle cx="12" cy="12" r="4" fill="#444" /><circle cx="19" cy="16" r="3" fill="#222" /></svg>
                <span className="ml-[3px]">摄像机</span>
            </div>
            <div className="relative flex items-center h-[20px] border-b border-[#ececec] bg-[#f8f8f8]">
                <Expander sign="−" />
                <svg width="15" height="15" viewBox="0 0 24 24"><path d="M1 5h8l2 3h9v14H1z" fill="#c89a30" stroke="#7a5a10" /><path d="M1 22l5-11h17l-4 11z" fill="#f0d060" stroke="#7a5a10" /></svg>
                <span className="ml-[3px]">模型历史记录</span>
            </div>
            {TREE.map((r, i) => (
                <div key={r.label} className={`relative flex items-center h-[20px] border-b border-[#ececec] ${i % 2 ? 'bg-[#f8f8f8]' : 'bg-white'}`}>
                    <Dots cls={`left-[28px] top-0 border-l ${i === 6 ? 'h-[10px]' : 'h-[20px]'}`} />
                    <Dots cls="left-[28px] top-[10px] w-[11px] border-t" />
                    <span className="w-[40px]" />
                    <span className="w-[12px] h-[12px] bg-white border border-[#333] flex items-center justify-center">
                        <svg width="10" height="10" viewBox="0 0 24 24"><path d="M2 13l4-3 4 5L19 3l4 3-13 16z" fill="#3aa82a" /></svg>
                    </span>
                    <svg width="15" height="15" viewBox="0 0 24 24" className="ml-[3px]">{TREE_ICONS[r.icon]}</svg>
                    <span className={`ml-[3px] ${r.dim ? 'text-[#aaa]' : ''} ${r.bold ? 'font-bold' : ''}`}>{r.label}</span>
                </div>
            ))}
            {Array.from({ length: 19 }).map((_, i) => (
                <div key={i} className={`h-[20px] border-b border-[#ececec] ${i % 2 ? 'bg-white' : 'bg-[#f8f8f8]'}`} />
            ))}
        </>
    );
}

function Section({ title }) {
    return (
        <div className="h-[24px] shrink-0 flex items-center justify-between border-b-2 border-[#d8d8d8] pl-[6px] pr-[4px] mx-[-1px]">
            <span className="text-[14px] leading-[20px] text-[#3f8fb0]">{title}</span>
            <ChevronDown size={15} strokeWidth={3} color="#3f8fb0" />
        </div>
    );
}

function NavPanel() {
    return (
        <div className="w-[217px] shrink-0 bg-[#f0f0f0] border-r border-[#9a9a9a] pl-[6px] pr-[8px] flex flex-col text-[12px] text-[#333]">
            <div className="h-[29px] shrink-0 flex items-center justify-between pl-[3px] pr-[5px]">
                <span>部件导航器</span>
                <span className="w-[12px] h-[10px] border border-[#222] border-t-2" />
            </div>
            <div className="h-[648px] shrink-0 bg-white border border-[#d4d4d4] overflow-hidden">
                <div className="h-[21px] bg-[#f0f0f0] border-b-2 border-[#d8d8d8] flex items-center pl-[6px]">
                    名称
                    <span className="ml-[14px] border-x-[5px] border-b-[5px] border-x-transparent border-b-[#222]" />
                </div>
                <Tree />
            </div>
            <div className="h-[16px] shrink-0 -mt-[16px] relative bg-[#ededed] flex items-center border border-[#e4e4e4]">
                <span className="ml-[7px] border-y-[4px] border-r-[4px] border-y-transparent border-r-[#333]" />
                <span className="ml-[7px] w-[80px] h-[14px] rounded-[2px] border border-[#8f8f8f] bg-gradient-to-b from-[#eee] to-[#cfcfcf] flex items-center justify-center text-[7px] leading-none text-[#555]">III</span>
                <span className="ml-auto mr-[7px] border-y-[4px] border-l-[4px] border-y-transparent border-l-[#333]" />
            </div>
            <div className="h-[5px] shrink-0 bg-[#d8d8d8] border border-[#c4c4c4] mt-[2px]" />
            <Section title="相依性" />
            <Section title="细节" />
            <Section title="预览" />
        </div>
    );
}

function Model() {
    return (
        <svg width="540" height="320" viewBox="0 0 1568 960" preserveAspectRatio="none" className="absolute left-[470px] top-[167px]">
            <defs>
                <linearGradient id="steel" x1="0" y1="0" x2="0" y2="1">
                    <stop offset="0" stopColor="#b4cad2" /><stop offset=".2" stopColor="#a5bbc3" /><stop offset=".55" stopColor="#6f8084" /><stop offset="1" stopColor="#3b4547" />
                </linearGradient>
                <linearGradient id="shaft" gradientUnits="userSpaceOnUse" x1="950" y1="380" x2="830" y2="860">
                    <stop offset="0" stopColor="#ffb44e" /><stop offset=".3" stopColor="#d8953f" /><stop offset=".7" stopColor="#a06c30" /><stop offset="1" stopColor="#56361a" />
                </linearGradient>
                <linearGradient id="cham" x1="0" y1="0" x2="0" y2="1">
                    <stop offset="0" stopColor="#e2f4fa" /><stop offset=".3" stopColor="#a8bec6" /><stop offset=".7" stopColor="#616f72" /><stop offset="1" stopColor="#394345" />
                </linearGradient>
            </defs>
            <path d="M520 100 340 55C290 40 230 42 170 65 110 90 50 150 8 220L0 220 0 680 8 680C50 730 100 770 150 785L400 835Z" fill="url(#steel)" stroke="#222" strokeWidth="1.5" />
            <ellipse cx="455" cy="475" rx="290" ry="375" transform="rotate(4 455 475)" fill="#8a9ea3" stroke="#222" strokeWidth="1.5" />
            <ellipse cx="467" cy="505" rx="188" ry="205" fill="url(#shaft)" />
            <path d="M650 300 1050 370 1320 435 1250 900 450 710Z" fill="url(#shaft)" />
            <ellipse cx="467" cy="505" rx="188" ry="205" fill="none" stroke="#ffa64c" strokeWidth="7" />
            <ellipse cx="1302" cy="668" rx="190" ry="236" fill="url(#cham)" stroke="#ffa64c" strokeWidth="7" />
            <ellipse cx="1320" cy="675" rx="165" ry="203" fill="#8b9da2" stroke="#222" strokeWidth="2.5" />
            <path d="M1165 635 1205 640 1225 655 1205 662ZM1320 672 1292 658 1282 665 1300 682Z" fill="#c9cfd1" />
            <path d="M1205 650 1290 664" stroke="#d8dcdd" strokeWidth="3" />
        </svg>
    );
}

function Triad() {
    return (
        <svg width="80" height="84" viewBox="0 -4 80 84" className="absolute left-[27px] top-[685px]" fontFamily="Noto Sans" fontSize="11">
            <polygon points="16,12 30,9 50,11 47,32 26,34 16,28" fill="#e0e0e0" stroke="#bbb" />
            <path d="M30 9l-4 25" stroke="#ccc" />
            <path d="M30 10 10 5" stroke="#2040b0" strokeWidth="2.500" />
            <text x="3" y="9" fill="#2040b0">Z</text>
            <path d="M30 10H60" stroke="#b83030" strokeWidth="2.500" />
            <path d="M58 7 67 11 58 13Z" fill="#b83030" />
            <text x="68" y="16" fill="#b83030">X</text>
            <path d="M30 10 27 50" stroke="#2e8a3a" strokeWidth="2.500" />
            <path d="M24 44 27 54 30 44Z" fill="#2e8a3a" />
            <text x="23" y="64" fill="#2e8a3a">Y</text>
            <circle cx="30" cy="10" r="4" fill="#eee" stroke="#aaa" />
        </svg>
    );
}

function BottomBar() {
    return (
        <div className="flex h-[34px] shrink-0 bg-[#f0f0f0]">
            <Bar h="h-[34px]">
                <Grip first /><I n="birdBox" /><Caret /><I n="partsG" /><I n="partsDis" /><I n="cubesPlus" /><Caret />
                <I n="scaleCube" /><I n="mirror" /><I n="flagPar" /><Sep />
                <I n="keyBox" /><I n="goldTri" /><I n="redStep" /><Sep /><I n="assy" /><Sep />
                <I n="chain" /><I n="chainBar" /><I n="treeInfo" /><Sep /><I n="twoCubes" /><Caret /><Caret low />
            </Bar>
            <Bar h="h-[34px]" extra="ml-[14px]">
                <Grip first /><I n="sketchNew" /><I n="flagDis" />
                <span className="w-[50px] pl-[3px] shrink-0 text-[12px] text-[#b4b4b4] whitespace-nowrap">完成草图</span>
                <I n="sCurve" /><I n="sLine" /><I n="sArc" /><I n="sCircle" /><I n="sFillet" /><I n="sChamfer" /><I n="sRect" /><I n="sPoly" /><I n="sPlus" /><I n="sOffset" /><Caret /><Sep />
                <I n="sTrim" /><I n="sExt" /><I n="sCorner" /><Sep /><I n="sBolt" /><Caret /><Sep />
                <I n="sPar" /><I n="sLen" /><I n="sLock" /><Caret /><Sep /><I n="sPair" /><I n="sLocks" /><I n="sLocks2" /><Caret low />
            </Bar>
        </div>
    );
}

function Taskbar() {
    return (
        <div className="relative flex h-[7px] shrink-0 border-t border-[#34485c] bg-gradient-to-r from-[#a8c0dc] from-[60%] to-[#8094ae] overflow-hidden">
            <span className="w-[119px] bg-[#7f92a9] flex pl-[8px]"><span className="w-[28px] h-[28px] rounded-full bg-[#dfe8f0] mt-[1px]" /></span>
            {[0, 1, 2, 3, 4].map(i => (
                <span key={i} className="w-[60px] mr-[2px] bg-[#eef2f6] border border-[#667] rounded-t-[3px]" />
            ))}
            <span className="absolute right-[8px] top-[1px] w-[10px] h-[6px] bg-[#c4c4c4] border border-[#555]" />
        </div>
    );
}

function Radio({ on, children }) {
    return (
        <span className="flex items-center gap-[5px]">
            <span className={`w-[12px] h-[12px] rounded-full border border-[#999] flex items-center justify-center ${on ? 'bg-[#dbe8f2]' : 'bg-[#e6e6e6]'}`}>
                {on && <span className="w-[6px] h-[6px] rounded-full bg-[#1a5f86]" />}
            </span>
            {children}
        </span>
    );
}

function Field({ label, value, unit, dim, h = 'h-[24px]' }) {
    return (
        <div className={`flex items-center justify-between ${h}`}>
            <span className={dim ? 'text-[#aaa]' : ''}>{label}</span>
            <span className={`w-[141px] h-full flex items-center border ${dim ? 'bg-white border-[#9a9a9a] text-[#aaa]' : 'bg-white border-[#aaaaaa] text-[#333]'}`}>
                <span className={`${dim ? 'bg-[#efefef]' : ''} w-[83px] h-[22px] pl-[4px] leading-[20px]`}>{value}</span>
                <span className={`${dim ? 'bg-[#efefef]' : ''} w-[38px] h-[22px] leading-[24px]`}>{unit}</span>
                <span className={`ml-[7px] border-x-[4px] border-t-[5px] border-x-transparent ${dim ? 'border-t-[#aaa]' : 'border-t-[#222]'}`} />
            </span>
        </div>
    );
}

function CheckLine({ on, dim, children, cls = '' }) {
    return (
        <div className={`flex items-center gap-[6px] ${cls} ${dim ? 'text-[#b0b0b0]' : ''}`}>
            <span className={`w-[12px] h-[12px] border flex items-center justify-center ${dim ? 'border-[#ccc] bg-[#eee]' : 'border-[#777] bg-[#eaeaea]'}`}>
                {on && <svg width="10" height="10" viewBox="0 0 24 24"><path d="M3 12l6 8L21 3" stroke="#3a4a80" strokeWidth="4" fill="none" /></svg>}
            </span>
            {children}
        </div>
    );
}

function SmallSelect({ w, dim, children }) {
    return (
        <span className={`${w} h-full bg-white border border-[#aaa] flex items-center justify-between pl-[4px] pr-[6px] ${dim ? 'text-[#aaa] bg-[#ececec]' : ''}`}>
            {children}
            <span className={`border-x-[4px] border-t-[5px] border-x-transparent ${dim ? 'border-t-[#aaa]' : 'border-t-[#222]'}`} />
        </span>
    );
}

const Line = ({ cls }) => <div className={`h-px bg-[#d2d2d2] ${cls}`} />;

function ThreadDialog() {
    return (
        <div className="absolute left-[395px] top-[135px] w-[328px] h-[636px] bg-[#e0e0e0] border border-[#b8b8b8] border-t-0 text-[12px] text-[#333]">
            <div className="h-[24px] bg-[#5b8780] flex items-center pl-[10px] pr-[7px] text-white">
                <svg width="14" height="14" viewBox="0 0 24 24" fill="none" stroke="#fff" strokeWidth="3.500">
                    <circle cx="12" cy="12" r="6.500" /><path d="M12 0v5M12 19v5M0 12h5M19 12h5M3 3l4 4M17 17l4 4M3 21l4-4M17 7l4-4" />
                </svg>
                <span className="ml-[9px] text-[13px] text-[#dfe9e7]">螺纹</span>
                <X size={17} strokeWidth={3} className="ml-auto" />
            </div>
            <div className="pl-[9px] pr-[9px]">
                <div className="ml-[94px] mt-[7px] w-[119px] h-[48px] bg-[#f2f2f2] pl-[9px]">
                    <div className="h-[20px] text-[14px] text-[#3f8fb0] leading-[20px]">螺纹类型</div>
                    <div className="flex gap-[16px] mt-[5px] -ml-[4px]"><Radio on>符号</Radio><Radio>详细</Radio></div>
                </div>
                <div className="mt-[5px] flex flex-col gap-[3px]">
                    <Field label="大径" value="13" unit="mm" />
                    <Field label="小径" value="12" unit="mm" />
                    <Field label="螺距" value="2.30886" unit="mm" />
                    <Field label="角度" value="60" unit="deg" />
                    <div className="flex items-center justify-between h-[21px]">
                        <span className="text-[#aaa]">标注</span>
                        <span className="w-[83px] h-full bg-[#ececec]" />
                    </div>
                    <div className="mt-px"><Field label="轴尺寸" value="12.5" unit="mm" /></div>
                    <div className="flex items-center justify-between h-[24px]">
                        <span>方法</span><SmallSelect w="w-[51px]">切削</SmallSelect>
                    </div>
                    <div className="flex items-center justify-between h-[24px]">
                        <span className="text-[#aaa]">形状</span><SmallSelect w="w-[89px]" dim>统一标准</SmallSelect>
                    </div>
                    <div className="flex items-center justify-between h-[22px]">
                        <span>螺纹头数</span>
                        <span className="w-[82px] h-full bg-white border border-[#aaa] text-right pr-[4px] text-[13px] leading-[20px]">1</span>
                    </div>
                </div>
                <CheckLine cls="mt-[3px]">锥孔</CheckLine>
                <Line cls="mt-[4px]" />
                <CheckLine on cls="mt-[4px]">完整螺纹</CheckLine>
                <div className="mt-[5px]"><Field label="长度" value="38.1" unit="mm" dim /></div>
                <Line cls="mt-[3px]" />
                <CheckLine on cls="mt-[4px]">手工输入</CheckLine>
                <div className="mt-[3px] h-[28px] border border-[#d2d2d2] flex items-center justify-center text-[#aaa]">从表格中选择</div>
                <Line cls="mt-[3px]" />
                <CheckLine dim cls="mt-[6px]">包含实例</CheckLine>
                <div className="mt-[1px] w-[63px] h-[71px] bg-[#f2f2f2] pl-[5px]">
                    <div className="h-[22px] text-[13px] text-[#3f8fb0] pl-[4px] leading-[22px]">旋转</div>
                    <div className="mt-[5px]"><Radio>右旋</Radio></div>
                    <div className="mt-[5px]"><Radio on>左旋</Radio></div>
                </div>
                <div className="mt-[6px] h-[28px] bg-[#e0e0e0] border border-[#9c9c9c] flex items-center justify-center">选择起始</div>
                <div className="mt-[12px] flex justify-end gap-[5px] pr-[6px]">
                    <span className="w-[54px] h-[25px] bg-[#94cbe8] border border-[#3f8fb0] flex items-center justify-center">确定</span>
                    <span className="w-[54px] h-[25px] bg-[#c8cacc] border border-[#a8a8a8] flex items-center justify-center">应用</span>
                    <span className="w-[54px] h-[25px] bg-[#c8cacc] border border-[#a8a8a8] flex items-center justify-center">取消</span>
                </div>
            </div>
        </div>
    );
}

function MessageDialog() {
    return (
        <div className="absolute left-[838px] top-[464px] w-[244px] h-[112px] bg-[#e0e0e0] border border-[#b0b0b0] border-t-0 text-[12px] text-[#333]">
            <div className="h-[28px] bg-[#5b8780] flex items-center pl-[9px] text-[#e4eeec]">消息</div>
            <div className="flex items-center h-[49px] pl-[15px]">
                <span className="w-[30px] h-[31px] rounded-full border border-[#999] bg-white flex items-center justify-center">
                    <span className="w-[27px] h-[27px] rounded-full bg-gradient-to-b from-[#e04040] to-[#8e0c14] flex items-center justify-center">
                        <X size={22} strokeWidth={4.5} color="#f4f4f4" />
                    </span>
                </span>
                <span className="ml-[15px]">螺纹直径和特征直径不同。</span>
            </div>
            <div className="flex justify-center">
                <span className="w-[63px] h-[25px] bg-[#ced0d2] border border-[#a5a5a5] flex items-center justify-center">确定(<u>O</u>)</span>
            </div>
        </div>
    );
}

function Watermark() {
    return (
        <div className="absolute left-[1637px] top-[952px] flex items-center">
            <svg width="72" height="82" viewBox="-36 -41 72 82">
                <polygon points="0,-41 -36,-20 0,0 14,-33" fill="#d6f0fd" />
                <polygon points="0,-41 36,-20 36,20 14,0" fill="#9adcfb" opacity=".9" />
                <polygon points="36,-20 36,20 0,41 -2,18" fill="#7fc9ee" />
                <polygon points="36,20 0,41 -20,20 -2,14" fill="#7fd0f6" />
                <polygon points="0,41 -36,20 -36,-5 -10,10" fill="#abdcf8" />
                <polygon points="-36,20 -36,-20 0,-25 -10,-5" fill="#bfe7fb" />
                <polygon points="0,-25 22,-12 22,12 0,25 -22,12 -22,-12" fill="#fff" />
                <polygon points="0,-18 16,-9 0,0 -16,-9" fill="#d5eefc" />
                <polygon points="-16,-9 0,0 0,18 -16,9" fill="#aee0f9" />
                <polygon points="16,-9 0,0 0,18 16,9" fill="#85cff2" />
                <path d="M14 -33C22 -20 24 -10 21 5M36 0C30 10 20 17 6 20M20 30C8 26 -2 22 -12 12M-36 8C-30 -3 -22 -12 -10 -18" stroke="#fff" fill="none" />
            </svg>
            <span className="ml-[11px] mt-[46px] text-[15px] tracking-[3.3px] text-[#fbfbfb] font-bold whitespace-nowrap">WWW.3DSJW.COM</span>
        </div>
    );
}

function Win({ cls }) {
    return (
        <span className="relative w-[12px] h-[11px]">
            <span className={`absolute right-0 top-0 w-[9px] h-[8px] border ${cls}`} />
            <span className={`absolute left-0 bottom-0 w-[9px] h-[8px] border bg-inherit ${cls}`} />
        </span>
    );
}

export default function App() {
    return (
        <div className="relative w-[1920px] h-[1048px] overflow-hidden flex flex-col bg-[#f0f0f0] text-[12px] text-[#333] font-['Noto_Sans','Noto_Sans_CJK_SC',sans-serif]">
            <div className="h-[26px] shrink-0 bg-[#f5f5f5] flex items-center pl-[4px]">
                <span className="w-[37px] text-[23px] font-bold text-[#8a9aa8] leading-[26px] font-['Liberation_Sans',sans-serif]">NX</span>
                <span className="w-px h-[22px] bg-[#ccc]" />
                <span className="ml-[5px] text-[13px] text-[#222] tracking-[0.1px]">NX 10 - 建模 - [thread.prt （修改的）]</span>
                <span className="ml-auto text-[12px] font-bold tracking-[1.2px] text-[#1a9a9e]">SIEMENS</span>
                <span className="ml-[24px] flex items-center gap-[9px] pr-[6px] text-[#555]">
                    <Minus size={14} strokeWidth={2} className="translate-y-[4px]" />
                    <Win cls="border-[#555]" />
                    <X size={16} />
                </span>
            </div>
            <div className="h-[27px] shrink-0 bg-[#c8d8d7] flex items-center pl-[8px] text-[#333]">
                <svg width="16" height="18" viewBox="0 0 24 24"><path d="M8 1c2 0 3 2 3 4l0 7 9-2c2 1 2 3 1 5-2 5-12 8-17 5-3-6 0-15 4-19z" fill="#2f6ac8" stroke="#1a3f80" /><path d="M8 5v11l6-1" stroke="#dde" fill="none" strokeWidth="2" /></svg>
                <span className="w-[6px]" />
                {MENU.map(([t, w]) => <span key={t} className={`${w} shrink-0 whitespace-nowrap tracking-[-0.3px]`}>{t}</span>)}
                <span className="ml-auto flex items-center gap-[5px] pr-[6px] text-[#1c2a2a]">
                    <Minus size={13} strokeWidth={2.5} className="translate-y-[3px]" />
                    <Win cls="border-[#1c2a2a]" />
                    <X size={14} strokeWidth={3} />
                </span>
            </div>
            <TopBars />
            <SelectionBar />
            <div className="h-[22px] shrink-0 bg-white flex items-center pl-[3px] pr-[38px]">
                <span className="text-[11px] text-[#111]">选择一个圆柱进行表格查询，或选择手工输入来跳过表格</span>
                <span className="ml-auto w-[16px] h-[16px] bg-[#cfcfcf] flex items-center justify-center">
                    <svg width="14" height="14" viewBox="0 0 24 24"><path d="M4 5l15 4-2 9-15-4z" fill="#ddd" stroke="#888" /><path d="M8 6l-2 9M12 7l-2 9M4 9l15 4" stroke="#888" /></svg>
                </span>
                <span className="ml-[4px] w-[16px] h-[16px] border border-dashed border-[#777] flex items-center justify-center">
                    <span className="w-[10px] h-[9px] bg-[#5b86c0] border border-[#334]" />
                </span>
            </div>
            <div className="flex flex-1 min-h-0">
                <LeftStrip />
                <NavPanel />
                <div className="relative flex-1 bg-white">
                    <Model />
                    <Triad />
                </div>
            </div>
            <BottomBar />
            <Taskbar />
            <ThreadDialog />
            <MessageDialog />
            <Watermark />
        </div>
    );
}
